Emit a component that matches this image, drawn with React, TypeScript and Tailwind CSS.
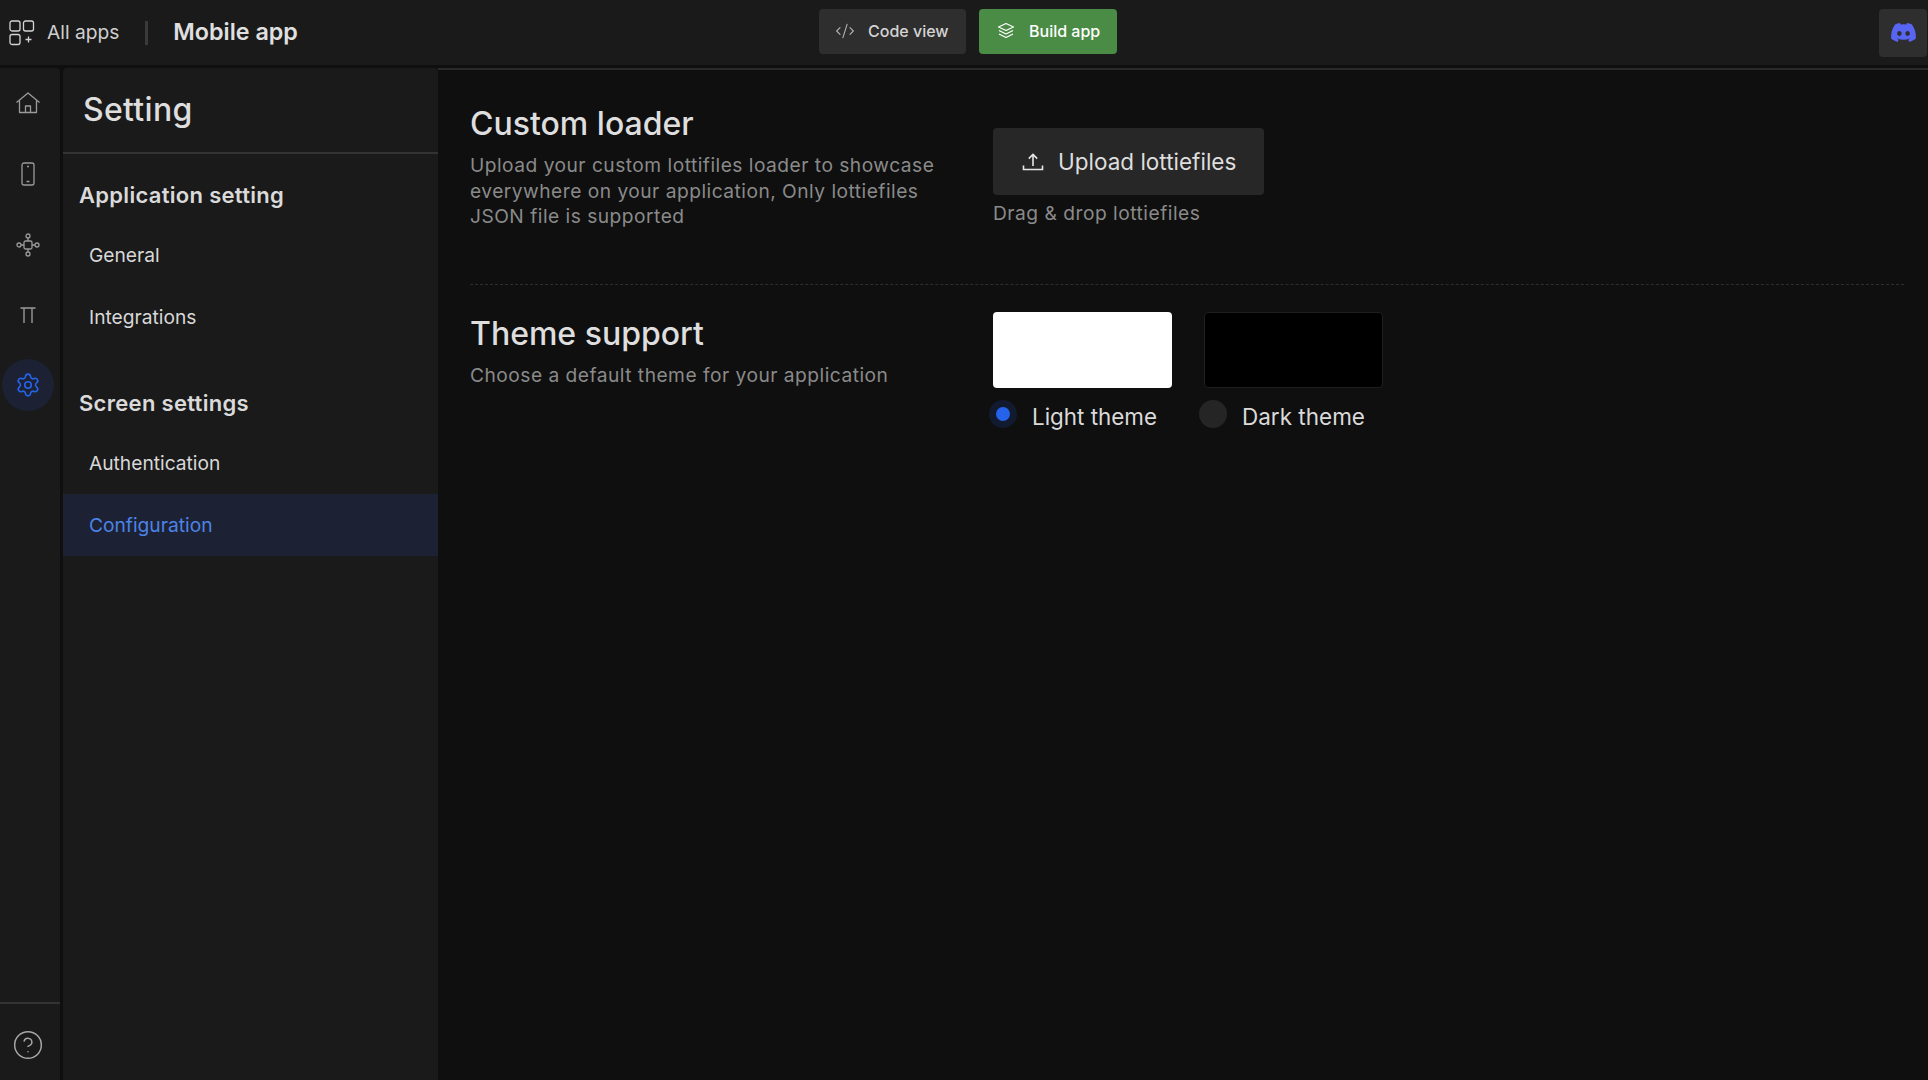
import { Settings, CircleHelp, CodeXml } from "lucide-react";
import { FaDiscord } from "react-icons/fa";

function GridPlusIcon() {
  return (
    <svg width="26" height="26" viewBox="0 0 26 26" fill="none" stroke="#d4d4d4" strokeWidth="1.3">
      <rect x="1" y="1" width="10" height="10" rx="2" />
      <rect x="14.5" y="1" width="10" height="10" rx="2" />
      <rect x="1" y="14.5" width="10" height="10" rx="2" />
      <path d="M19.5 16.5v6M16.5 19.5h6" />
    </svg>
  );
}

function HomeIcon() {
  return (
    <svg className="-translate-y-[2px]" width="26" height="24" viewBox="0 0 26 24" fill="none" stroke="#9a9a9a" strokeWidth="1.3" strokeLinejoin="round">
      <path d="M1.5 11.5 13 2l11.5 9.5" />
      <path d="M4.5 9.5V21.5h17V9.5" />
      <path d="M10.5 21.5V15h5v6.5" />
    </svg>
  );
}

function PhoneIcon() {
  return (
    <svg className="-translate-y-[1px]" width="24" height="24" viewBox="0 0 24 24" fill="none" stroke="#9a9a9a" strokeWidth="1.3">
      <rect x="6" y="1" width="12" height="22" rx="2" />
      <path d="M11 4.5h2M10.5 19.5h3" />
    </svg>
  );
}

function NodesIcon() {
  return (
    <svg width="24" height="24" viewBox="0 0 24 24" fill="none" stroke="#9a9a9a" strokeWidth="1.3">
      <rect x="8" y="8" width="8" height="8" rx="1.5" />
      <circle cx="12" cy="3" r="2" />
      <circle cx="12" cy="21" r="2" />
      <circle cx="3" cy="12" r="2" />
      <circle cx="21" cy="12" r="2" />
      <path d="M12 5v3M12 16v3M5 12h3M16 12h3" />
    </svg>
  );
}

function TextIcon() {
  return (
    <svg className="translate-y-[1px]" width="24" height="24" viewBox="0 0 24 24" fill="none" stroke="#9a9a9a" strokeWidth="1.4">
      <path d="M4.5 4h15M8 4v15M16 4v15" />
    </svg>
  );
}

function LayersIcon() {
  return (
    <svg width="18" height="18" viewBox="0 0 18 18" fill="none" stroke="#ffffff" strokeWidth="1.2" strokeLinejoin="round">
      <path d="M9 1.5 16.5 5 9 8.5 1.5 5Z" />
      <path d="M2 8.5 9 12l7-3.5" />
      <path d="M2 12l7 3.5 7-3.5" />
    </svg>
  );
}

function UploadIcon() {
  return (
    <svg width="22" height="22" viewBox="0 0 22 22" fill="none" stroke="#e5e5e5" strokeWidth="1.6">
      <path d="M11 15V4M6.8 7.6 11 3.4l4.2 4.2" />
      <path d="M1.5 14.5v4h19v-4" />
    </svg>
  );
}

function RailButton({ children }: { children: React.ReactNode }) {
  return <div className="flex h-[70px] items-center justify-center pr-[4px]">{children}</div>;
}

function NavItem({ label, active }: { label: string; active?: boolean }) {
  return (
    <div
      className={
        active
          ? "flex h-[62px] items-center bg-[#1c2233] pl-[26px] text-[19.2px] text-[#4d82e8]"
          : "flex h-[62px] items-center pl-[26px] text-[19.2px] text-[#d8d8d8]"
      }
    >
      {label}
    </div>
  );
}

export default function App() {
  return (
    <div className="flex h-[1080px] w-[1928px] flex-col overflow-hidden bg-[#0f0f0f] font-['Inter',sans-serif]">
      {/* top bar */}
      <header className="relative flex h-[65px] shrink-0 items-center bg-[#1a1a1a]">
        <div className="ml-[9px] flex items-center">
          <GridPlusIcon />
          <span className="ml-[12px] text-[19.2px] text-[#cfcfcf]">All apps</span>
          <div className="ml-[26px] h-[24px] w-[3px] bg-[#3a3a3a]" />
          <span className="ml-[25px] text-[23.3px] font-semibold text-[#e0e0e0]">Mobile app</span>
        </div>
        <div className="absolute top-[9px] left-[819px] flex gap-[13px]">
          <button className="flex h-[45px] w-[147px] items-center gap-[13px] rounded-[4px] bg-[#2e2e2e] pb-[1px] pl-[16px] text-[16px] font-medium text-[#d4d4d4]">
            <CodeXml size={20} strokeWidth={1.3} color="#b4b4b4" />
            Code view
          </button>
          <button className="flex h-[45px] w-[138px] items-center gap-[14px] rounded-[4px] bg-[#4a8c45] pb-[1px] pl-[18px] text-[16px] font-medium text-white">
            <LayersIcon />
            Build app
          </button>
        </div>
        <button className="ml-auto mr-[1px] flex h-[48px] w-[48px] items-center justify-center rounded-[4px] bg-[#2e2e2e]">
          <FaDiscord size={27} color="#5865f2" />
        </button>
      </header>

      <div className="flex min-h-0 flex-1 pt-[3px]">
        {/* icon rail */}
        <aside className="flex w-[60px] shrink-0 flex-col rounded-tr-[4px] bg-[#1a1a1a] pt-[2px]">
          <div>
            <RailButton><HomeIcon /></RailButton>
            <RailButton><PhoneIcon /></RailButton>
            <RailButton><NodesIcon /></RailButton>
            <RailButton><TextIcon /></RailButton>
            <RailButton>
              <div className="flex h-[52px] w-[52px] items-center justify-center rounded-full bg-[#1c2233]">
                <Settings size={26} strokeWidth={1.5} color="#2563eb" />
              </div>
            </RailButton>
          </div>
          <div className="mt-auto flex h-[78px] items-center justify-center border-t-2 border-[#333333] pt-[5px] pr-[4px]">
            <CircleHelp size={32} strokeWidth={1.1} color="#a8a8a8" />
          </div>
        </aside>

        {/* settings sidebar */}
        <nav className="ml-[3px] w-[375px] shrink-0 rounded-t-[4px] bg-[#1a1a1a]">
          <div className="flex h-[86px] items-center border-b-2 border-[#333333] pl-[20px] text-[32px] tracking-[0.3px] font-medium text-[#dedede]">
            Setting
          </div>
          <div className="pt-[25px] pl-[16px] text-[22px] tracking-[0.3px] font-semibold text-[#dadada]">Application setting</div>
          <div className="mt-[12px]">
            <NavItem label="General" />
            <NavItem label="Integrations" />
          </div>
          <div className="pt-[38.5px] pl-[16px] text-[22px] tracking-[0.3px] font-semibold text-[#dadada]">Screen settings</div>
          <div className="mt-[12.5px]">
            <NavItem label="Authentication" />
            <NavItem label="Configuration" active />
          </div>
        </nav>

        {/* content */}
        <main className="min-w-0 flex-1 border-t-2 border-[#2a2a2a] pt-[34px] pl-[32px] pr-[24px]">
          <section className="flex h-[181px] border-b border-dashed border-[#2e2e2e]">
            <div className="w-[523px] shrink-0">
              <h2 className="text-[32px] leading-[40px] font-medium text-[#dedede]">Custom loader</h2>
              <p className="mt-[9px] w-[500px] text-[19.2px] leading-[25.7px] tracking-[0.48px] text-[#8a8a8a]">
                Upload your custom lottifiles loader to showcase everywhere on your application, Only lottiefiles JSON file is supported
              </p>
            </div>
            <div className="pt-[24px]">
              <button className="flex h-[67px] w-[271px] items-center gap-[14px] rounded-[4px] bg-[#272727] pl-[29px] text-[22.5px] text-[#dedede]">
                <UploadIcon />
                Upload lottiefiles
              </button>
              <div className="mt-[4px] text-[19.2px] tracking-[0.5px] text-[#8a8a8a]">Drag &amp; drop lottiefiles</div>
            </div>
          </section>

          <section className="flex pt-[27px]">
            <div className="w-[523px] shrink-0 pt-[2px]">
              <h2 className="text-[32px] leading-[40px] font-medium text-[#dedede]">Theme support</h2>
              <p className="mt-[9px] text-[19.2px] leading-[25.5px] tracking-[0.48px] text-[#8a8a8a]">
                Choose a default theme for your application
              </p>
            </div>
            <div className="flex gap-[32px]">
              <div className="w-[179px]">
                <div className="h-[76px] rounded-[4px] bg-white" />
                <div className="mt-[12px] flex items-start">
                  <span className="-ml-[4px] flex h-[28px] w-[28px] items-center justify-center rounded-full bg-[#111a2e]">
                    <span className="h-[14px] w-[14px] rounded-full bg-[#2563eb]" />
                  </span>
                  <span className="ml-[15px] pt-[2px] text-[22.4px] leading-[29px] text-[#dadada]">Light theme</span>
                </div>
              </div>
              <div className="w-[179px]">
                <div className="h-[76px] rounded-[4px] border border-[#1f1f1f] bg-black" />
                <div className="mt-[12px] flex items-start">
                  <span className="-ml-[5px] h-[28px] w-[28px] rounded-full bg-[#252525]" />
                  <span className="ml-[15px] pt-[2px] text-[22.5px] leading-[29px] text-[#dadada]">Dark theme</span>
                </div>
              </div>
            </div>
          </section>
        </main>
      </div>
    </div>
  );
}
